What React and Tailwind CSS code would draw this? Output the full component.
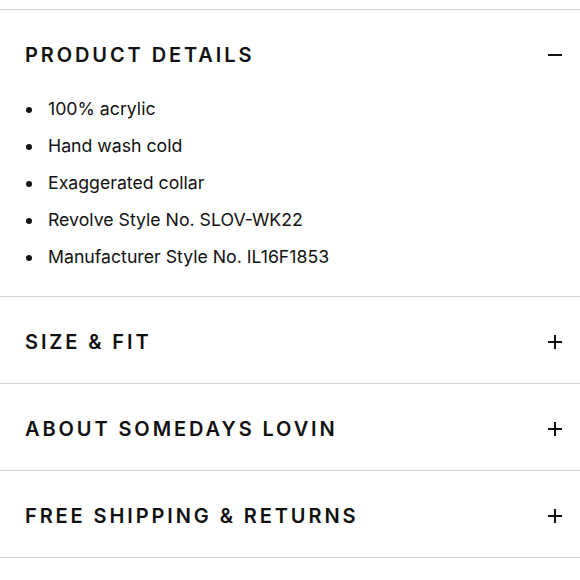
import { useState } from "react"

const sections = [
  {
    title: "PRODUCT DETAILS",
    items: [
      "100% acrylic",
      "Hand wash cold",
      "Exaggerated collar",
      "Revolve Style No. SLOV-WK22",
      "Manufacturer Style No. IL16F1853",
    ],
  },
  { title: "SIZE & FIT", items: [] },
  { title: "ABOUT SOMEDAYS LOVIN", items: [] },
  { title: "FREE SHIPPING & RETURNS", items: [] },
]

const Toggle = ({ open }) => (
  <span className="relative block w-[14px] h-[14px]">
    <span className="absolute left-0 top-[6px] w-[14px] h-[2px] bg-[#111]" />
    {!open && <span className="absolute left-[6px] top-0 w-[2px] h-[14px] bg-[#111]" />}
  </span>
)

const App = () => {
  const [openIndex, setOpenIndex] = useState(0)

  return (
    <div className="min-h-screen bg-white pt-[9px] text-[#111]" style={{ fontFamily: "Inter, 'Noto Sans', sans-serif" }}>
      {sections.map((s, i) => {
        const open = openIndex === i
        return (
          <div key={s.title} className="border-t border-[#d2d2d2]">
            <button
              onClick={() => setOpenIndex(open ? -1 : i)}
              className="w-full h-[86px] pt-[3px] flex items-center justify-between pl-[25px] pr-[18px] text-left"
            >
              <span className="text-[20px] leading-[20px] font-semibold tracking-[0.145em]">{s.title}</span>
              <Toggle open={open} />
            </button>
            {open && s.items.length > 0 && (
              <ul className="-mt-[5px] pb-[20px] pl-[25px]">
                {s.items.map((item) => (
                  <li key={item} className="flex items-center h-[37px] text-[17.7px]">
                    <span className="w-[6px] h-[6px] rounded-full bg-[#111] ml-[1px] mr-[16px]" />
                    {item}
                  </li>
                ))}
              </ul>
            )}
          </div>
        )
      })}
      <div className="border-t border-[#d2d2d2]" />
    </div>
  )
}

export default App
